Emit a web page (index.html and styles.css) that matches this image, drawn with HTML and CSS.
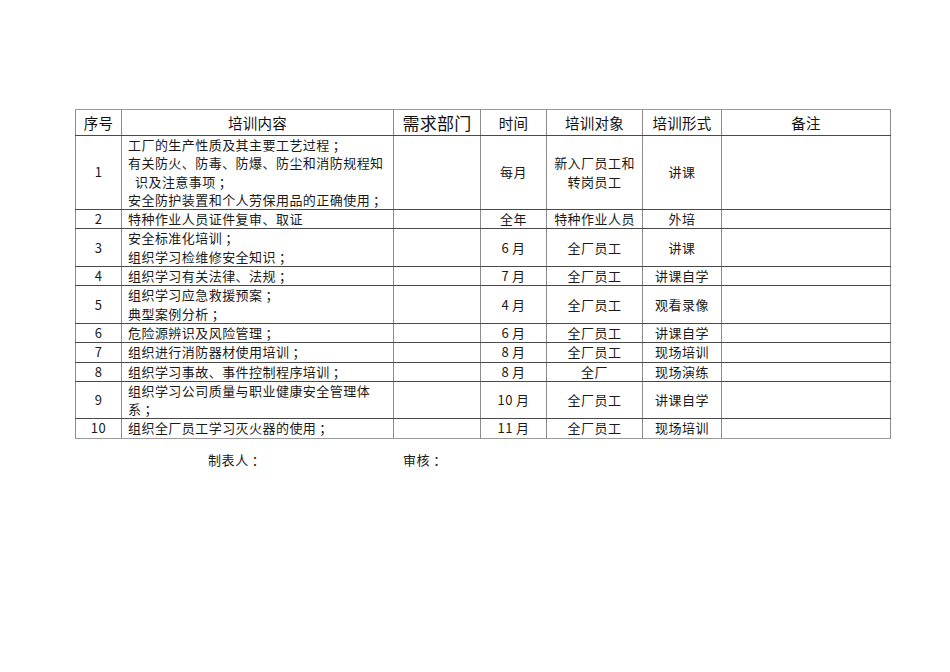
FILE: index.html
```html
<!DOCTYPE html>
<html lang="zh-CN">
<head>
<meta charset="utf-8">
<title>培训计划</title>
<link rel="stylesheet" href="styles.css">
</head>
<body>
<div class="page">
  <table class="plan">
    <colgroup>
      <col class="c-no"><col class="c-content"><col class="c-dept"><col class="c-time"><col class="c-target"><col class="c-form"><col class="c-note">
    </colgroup>
    <thead>
      <tr class="head">
        <th>序号</th><th>培训内容</th><th class="big">需求部门</th><th>时间</th><th>培训对象</th><th>培训形式</th><th>备注</th>
      </tr>
    </thead>
    <tbody>
      <tr>
        <td class="ctr">1</td>
        <td class="txt">工厂的生产性质及其主要工艺过程<span class="p">；</span><br>有关防火、防毒、防爆、防尘和消防规程知<br><span class="indent">识及注意事项<span class="p">；</span></span><br>安全防护装置和个人劳保用品的正确使用<span class="p">；</span></td>
        <td></td><td class="ctr">每月</td><td class="ctr">新入厂员工和<br>转岗员工</td><td class="ctr">讲课</td><td></td>
      </tr>
      <tr>
        <td class="ctr">2</td><td class="txt">特种作业人员证件复审、取证</td><td></td><td class="ctr">全年</td><td class="ctr">特种作业人员</td><td class="ctr">外培</td><td></td>
      </tr>
      <tr>
        <td class="ctr">3</td><td class="txt">安全标准化培训<span class="p">；</span><br>组织学习检维修安全知识<span class="p">；</span></td><td></td><td class="ctr">6&#8201;月</td><td class="ctr">全厂员工</td><td class="ctr">讲课</td><td></td>
      </tr>
      <tr>
        <td class="ctr">4</td><td class="txt">组织学习有关法律、法规<span class="p">；</span></td><td></td><td class="ctr">7&#8201;月</td><td class="ctr">全厂员工</td><td class="ctr">讲课自学</td><td></td>
      </tr>
      <tr>
        <td class="ctr">5</td><td class="txt">组织学习应急救援预案<span class="p">；</span><br>典型案例分析<span class="p">；</span></td><td></td><td class="ctr">4&#8201;月</td><td class="ctr">全厂员工</td><td class="ctr">观看录像</td><td></td>
      </tr>
      <tr>
        <td class="ctr">6</td><td class="txt">危险源辨识及风险管理<span class="p">；</span></td><td></td><td class="ctr">6&#8201;月</td><td class="ctr">全厂员工</td><td class="ctr">讲课自学</td><td></td>
      </tr>
      <tr>
        <td class="ctr">7</td><td class="txt">组织进行消防器材使用培训<span class="p">；</span></td><td></td><td class="ctr">8&#8201;月</td><td class="ctr">全厂员工</td><td class="ctr">现场培训</td><td></td>
      </tr>
      <tr>
        <td class="ctr">8</td><td class="txt">组织学习事故、事件控制程序培训<span class="p">；</span></td><td></td><td class="ctr">8&#8201;月</td><td class="ctr">全厂</td><td class="ctr">现场演练</td><td></td>
      </tr>
      <tr>
        <td class="ctr">9</td><td class="txt">组织学习公司质量与职业健康安全管理体<br>系<span class="p">；</span></td><td></td><td class="ctr">10&#8201;月</td><td class="ctr">全厂员工</td><td class="ctr">讲课自学</td><td></td>
      </tr>
      <tr class="last">
        <td class="ctr">10</td><td class="txt">组织全厂员工学习灭火器的使用<span class="p">；</span></td><td></td><td class="ctr">11&#8201;月</td><td class="ctr">全厂员工</td><td class="ctr">现场培训</td><td></td>
      </tr>
    </tbody>
  </table>
  <div class="sign">
    <span class="maker">制表人<span class="p">：</span></span>
    <span class="check">审核<span class="p">：</span></span>
  </div>
</div>
</body>
</html>
```
FILE: styles.css
```css
html, body {
  margin: 0;
  padding: 0;
  background: #ffffff;
}
body {
  font-family: "Noto Sans CJK SC", "Noto Sans", "Liberation Sans", sans-serif;
  color: #1a1a1a;
}
.page {
  padding: 109px 0 0 75px;
}
.plan {
  border-collapse: collapse;
  table-layout: fixed;
  width: 815px;
}
.c-no { width: 46px; }
.c-content { width: 272px; }
.c-dept { width: 87px; }
.c-time { width: 66px; }
.c-target { width: 96px; }
.c-form { width: 79px; }
.c-note { width: 169px; }

.plan th,
.plan td {
  border-left: 1px solid #8c8c8c;
  border-right: 1px solid #8c8c8c;
  border-top: 1px solid #4a4a4a;
  border-bottom: 1px solid #4a4a4a;
  padding: 0;
  vertical-align: middle;
}
.plan th {
  font-weight: normal;
  font-size: 14.5px;
  line-height: 25px;
  letter-spacing: 0.3px;
  text-align: center;
  color: #111;
  border-top-color: #9a9a9a;
}
.plan th.big {
  font-size: 17px;
}
.plan td {
  font-size: 13px;
  letter-spacing: 0.45px;
  line-height: 18.3px;
}
.plan tr.last td {
  border-bottom-color: #9a9a9a;
}
.plan td.ctr {
  text-align: center;
}
.plan td.txt {
  padding-left: 6px;
  text-align: left;
}
.indent {
  padding-left: 7px;
}
.p {
  display: inline-block;
  width: 1em;
  padding-left: 3px;
  text-align: center;
}
.sign {
  display: flex;
  padding: 12px 0 0 133px;
  font-size: 13px;
  letter-spacing: 0.6px;
  line-height: 18px;
}
.maker {
  width: 195px;
}
```
